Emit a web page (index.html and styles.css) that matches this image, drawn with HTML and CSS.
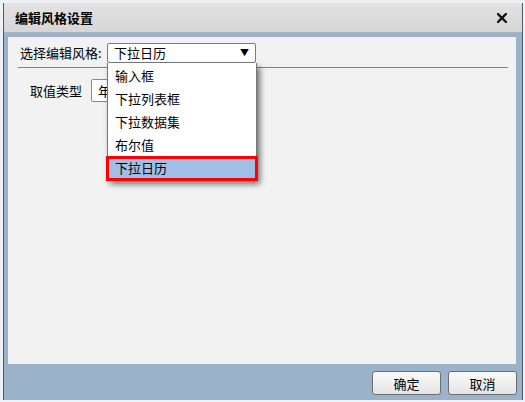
FILE: index.html
```html
<!DOCTYPE html>
<html lang="zh">
<head>
  <meta charset="UTF-8" />
  <title>编辑风格设置</title>
  <link rel="stylesheet" href="styles.css">
</head>
<body>
  <div class="dialog">
    <div class="titlebar">
      <span class="title">编辑风格设置</span>
      <svg class="close" width="10" height="10" viewBox="0 0 10 10">
        <path d="M1 1 L9 9 M9 1 L1 9" stroke="#111" stroke-width="2.4" stroke-linecap="square" />
      </svg>
    </div>

    <div class="frame">
      <div class="panel">
        <div class="row first">
          <span class="label">选择编辑风格:</span>
          <div class="select">
            <span>下拉日历</span>
            <span class="arrow">▼</span>
          </div>
        </div>
        <div class="divider"></div>
        <div class="row second">
          <span class="label small">取值类型</span>
          <div class="input">年</div>
        </div>

        <!-- open dropdown list -->
        <ul class="dropdown">
          <li>输入框</li>
          <li>下拉列表框</li>
          <li>下拉数据集</li>
          <li>布尔值</li>
          <li class="active">下拉日历</li>
        </ul>
      </div>
    </div>

    <div class="footer">
      <button>确定</button>
      <button>取消</button>
    </div>
  </div>
</body>
</html>
```

FILE: styles.css
```css
* {
  box-sizing: border-box;
  margin: 0;
  padding: 0;
}

body {
  background: #eef2f7;
  padding: 3px 2px 2px 3px;
  font-family: "Noto Sans CJK SC", "Noto Sans", sans-serif;
  font-size: 13px;
  color: #000;
}

.dialog {
  width: 520px;
  height: 397px;
  background: #9ab3ca;
  border-left: 1px solid #555b66;
  border-right: 1px solid #555b66;
  display: flex;
  flex-direction: column;
}

.titlebar {
  height: 30px;
  background: linear-gradient(#e2e2e2, #d6d6d6);
  border-bottom: 1px solid #a9b4bf;
  display: flex;
  align-items: center;
  justify-content: space-between;
  padding: 0 15px 0 11px;
}

.title {
  font-weight: bold;
  font-size: 13px;
}

.close {
  display: block;
}

.frame {
  padding: 4px 6px 0 4px;
}

.panel {
  position: relative;
  height: 327px;
  background: #f2f2f2;
  padding: 6px 8px 0 12px;
}

.row {
  display: flex;
  align-items: center;
}

.label {
  width: 87px;
  line-height: 20px;
}

.select {
  width: 149px;
  height: 20px;
  border: 1px solid #7a7a7a;
  border-radius: 2px;
  background: #fff;
  display: flex;
  align-items: center;
  justify-content: space-between;
  padding: 0 6px 0 6px;
  line-height: 18px;
}

.arrow {
  font-size: 9px;
}

.divider {
  height: 1px;
  background: #5f87b0;
  margin: 4px 0 0 -2px;
}

.second {
  margin-top: 11px;
  padding-left: 10px;
}

.label.small {
  width: 61px;
}

.input {
  width: 120px;
  height: 23px;
  border: 1px solid #8a8a8a;
  border-radius: 2px;
  background: #fff;
  padding-left: 6px;
  line-height: 21px;
}

.dropdown {
  position: absolute;
  left: 99px;
  top: 26px;
  width: 150px;
  list-style: none;
  background: #fff;
  border: 1px solid #777;
  border-top: none;
  box-shadow: 3px 4px 6px rgba(0, 0, 0, 0.55);
  padding-top: 2px;
}

.dropdown li {
  height: 23px;
  line-height: 21px;
  padding-left: 7px;
}

.dropdown li.active {
  background: #a1bfe6;
  outline: 3px solid #ff0000;
  outline-offset: -2px;
  margin: 0 -1px -1px;
  padding-left: 8px;
}

.footer {
  flex: 1;
  display: flex;
  justify-content: flex-end;
  align-items: center;
  gap: 7px;
  padding: 2px 5px 0 0;
}

button {
  width: 69px;
  height: 24px;
  font-family: inherit;
  font-size: 13px;
  border: 1px solid #6f6f6f;
  border-radius: 3px;
  background: linear-gradient(#fafafa, #e4e4e4);
  color: #000;
}
```
